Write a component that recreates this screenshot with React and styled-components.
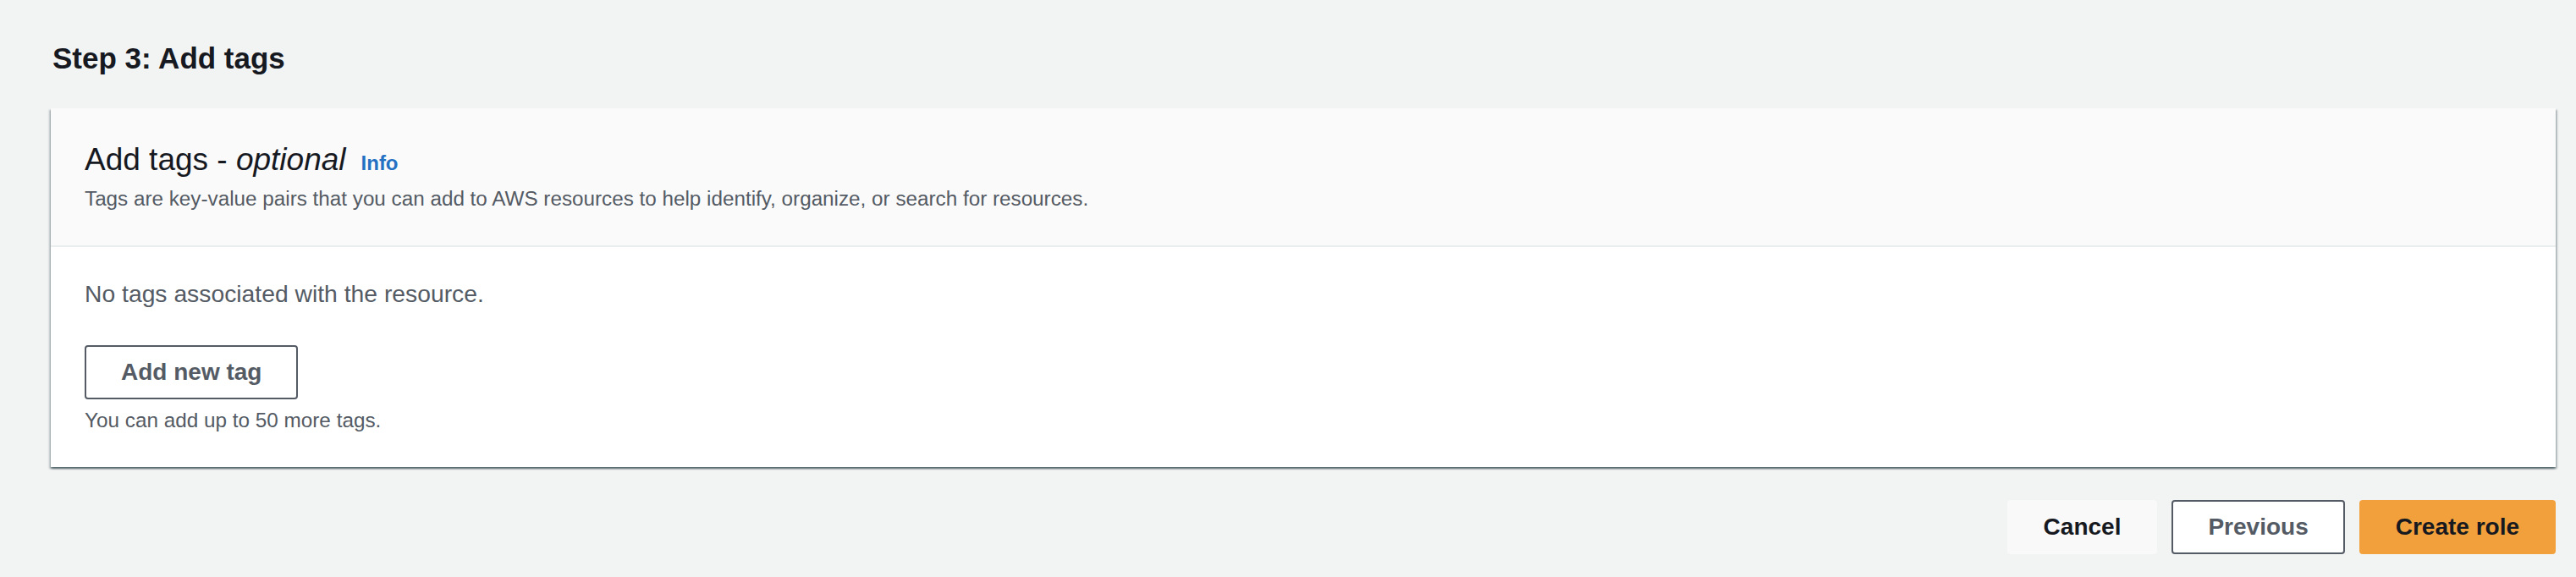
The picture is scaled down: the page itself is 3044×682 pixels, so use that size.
import React from "react";
import styled, { createGlobalStyle } from "styled-components";

const GlobalStyle = createGlobalStyle`
  html, body {
    margin: 0;
    padding: 0;
    background: #f2f3f3;
    font-family: "Liberation Sans", Arial, sans-serif;
  }
`;

const Page = styled.div`
  display: flex;
  flex-direction: column;
  min-height: 682px;
  box-sizing: border-box;
  padding: 47px 24px 0 60px;
`;

const StepTitle = styled.h2`
  margin: 0 0 37px 2px;
  font-size: 35px;
  line-height: 44px;
  font-weight: 700;
  color: #16191f;
`;

const Card = styled.section`
  background: #ffffff;
  box-shadow: 0 2px 2px 0 rgba(0, 28, 36, 0.45),
    2px 2px 2px 0 rgba(0, 28, 36, 0.2), -2px 2px 2px 0 rgba(0, 28, 36, 0.2);
`;

const CardHeader = styled.div`
  background: #fafafa;
  padding: 39px 40px 39px 40px;
  border-bottom: 2px solid #eaeded;
`;

const TitleRow = styled.div`
  display: flex;
  align-items: baseline;
  gap: 18px;
`;

const CardTitle = styled.h3`
  margin: 0;
  font-size: 37px;
  line-height: 44px;
  font-weight: 400;
  color: #16191f;

  em {
    font-style: italic;
  }
`;

const InfoLink = styled.a`
  font-size: 24px;
  font-weight: 700;
  color: #2471c3;
  text-decoration: none;
`;

const Description = styled.p`
  margin: 8px 0 0;
  font-size: 24.25px;
  line-height: 32px;
  color: #545b64;
`;

const CardBody = styled.div`
  padding: 35px 40px 39px 40px;
`;

const EmptyText = styled.p`
  margin: 0 0 41px;
  font-size: 28.3px;
  line-height: 40px;
  color: #545b64;
`;

const Hint = styled.p`
  margin: 9px 0 0;
  font-size: 24.3px;
  line-height: 32px;
  color: #545b64;
`;

const Button = styled.button`
  box-sizing: border-box;
  height: 64px;
  padding: 0 41px;
  border-radius: 4px;
  border: 2px solid
    ${(p) => (p.$variant === "normal" ? "#545b64" : "transparent")};
  background: ${(p) =>
    p.$variant === "primary"
      ? "#f2a03b"
      : p.$variant === "link"
      ? "#f9f9f9"
      : "#ffffff"};
  color: ${(p) => (p.$variant === "normal" ? "#545b64" : "#16191f")};
  font-family: "Liberation Sans", Arial, sans-serif;
  font-size: 28px;
  font-weight: 700;
  cursor: pointer;
`;

const Actions = styled.div`
  display: flex;
  justify-content: flex-end;
  gap: 17px;
  margin-top: 39px;
`;

export default function App() {
  return (
    <>
      <GlobalStyle />
      <Page>
        <StepTitle>Step 3: Add tags</StepTitle>
        <Card>
          <CardHeader>
            <TitleRow>
              <CardTitle>
                Add tags - <em>optional</em>
              </CardTitle>
              <InfoLink href="#">Info</InfoLink>
            </TitleRow>
            <Description>
              Tags are key-value pairs that you can add to AWS resources to
              help identify, organize, or search for resources.
            </Description>
          </CardHeader>
          <CardBody>
            <EmptyText>No tags associated with the resource.</EmptyText>
            <Button $variant="normal">Add new tag</Button>
            <Hint>You can add up to 50 more tags.</Hint>
          </CardBody>
        </Card>
        <Actions>
          <Button $variant="link">Cancel</Button>
          <Button $variant="normal">Previous</Button>
          <Button $variant="primary">Create role</Button>
        </Actions>
      </Page>
    </>
  );
}
